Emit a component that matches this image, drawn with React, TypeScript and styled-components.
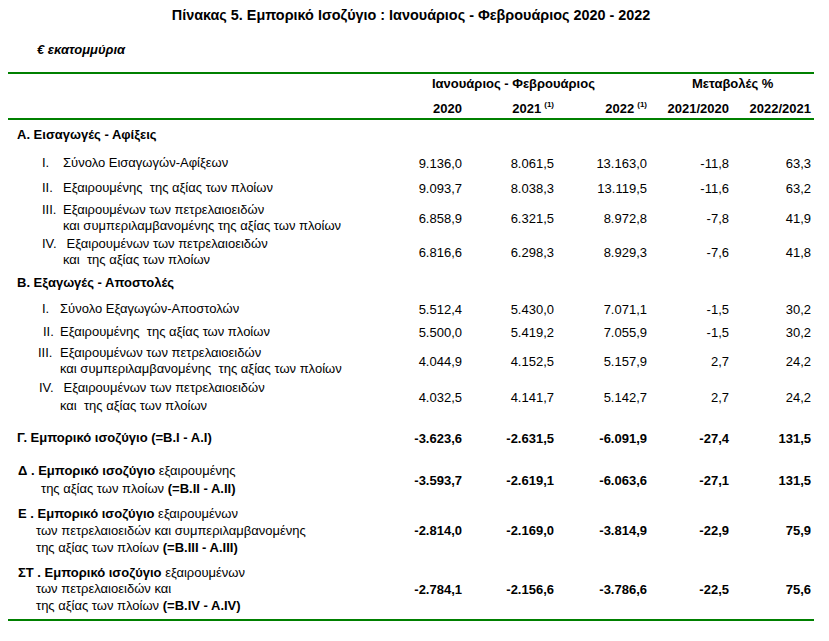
import React from "react";
import styled, { createGlobalStyle } from "styled-components";

const Global = createGlobalStyle`
  html, body { margin: 0; padding: 0; background: #fff; }
  body { font-family: "Liberation Sans", Arial, sans-serif; color: #000; }
`;

const GREEN = "#008000";
const COLS = "392px 62px 92px 93px 82px 82px 3px";

const Page = styled.div`
  width: 829px;
  padding: 7px 15px 0 8px;
  box-sizing: border-box;
`;

const Title = styled.div`
  text-align: center;
  font-weight: bold;
  font-size: 14.4px;
  line-height: 16px;
  height: 16px;
`;

const Unit = styled.div`
  margin: 19px 0 0 29px;
  font-weight: bold;
  font-style: italic;
  font-size: 13px;
  line-height: 16px;
`;

const Table = styled.div`
  margin-top: 14px;
  width: 806px;
  border-top: 2px solid ${GREEN};
  border-bottom: 2px solid ${GREEN};
`;

const Head = styled.div`
  border-bottom: 2px solid ${GREEN};
  height: 46px;
  box-sizing: border-box;
`;

const HeadRow = styled.div<{ $h: number; $pt?: number }>`
  display: grid;
  grid-template-columns: ${COLS};
  height: ${(p) => p.$h}px;
  padding-top: ${(p) => p.$pt ?? 0}px;
  box-sizing: border-box;
  font-weight: bold;
  font-size: 13px;
  line-height: 16px;
  align-items: ${(p) => (p.$pt ? "start" : "center")};
`;

const Group = styled.div<{ $from: number; $to: number; $pl: number }>`
  grid-column: ${(p) => p.$from} / ${(p) => p.$to};
  padding-left: ${(p) => p.$pl}px;
  white-space: nowrap;
`;

const HeadCell = styled.div<{ $col: number }>`
  grid-column: ${(p) => p.$col};
  text-align: right;
  white-space: nowrap;
`;

const Sup = styled.sup`
  font-size: 8px;
  line-height: 0;
  vertical-align: 6px;
  margin-left: 3px;
`;

const Row = styled.div<{ $h: number; $bold?: boolean }>`
  display: grid;
  grid-template-columns: ${COLS};
  height: ${(p) => p.$h}px;
  align-items: center;
  font-size: 13px;
  font-weight: ${(p) => (p.$bold ? "bold" : "normal")};
`;

const Label = styled.div<{ $lh?: number }>`
  grid-column: 1;
  display: flex;
  line-height: ${(p) => p.$lh ?? 16}px;
  white-space: pre;
`;

const Section = styled.div`
  padding-left: 9px;
  font-weight: bold;
  line-height: 16px;
`;

const Numeral = styled.span<{ $left: number; $w: number }>`
  margin-left: ${(p) => p.$left}px;
  width: ${(p) => p.$w}px;
  flex: none;
`;

const Lines = styled.div`
  display: flex;
  flex-direction: column;
`;

const Summary = styled.div<{ $lh: number }>`
  padding-left: 10px;
  line-height: ${(p) => p.$lh}px;
  white-space: pre;
  font-weight: normal;
`;

const Indent = styled.div<{ $pl: number }>`
  padding-left: ${(p) => p.$pl}px;
`;

const B = styled.b`
  font-weight: bold;
`;

const Num = styled.div`
  text-align: right;
  white-space: nowrap;
`;

type Vals = [string, string, string, string, string];

const Nums = ({ v }: { v: Vals }) => (
  <>
    {v.map((x, i) => (
      <Num key={i}>{x}</Num>
    ))}
  </>
);

type Item = {
  h: number;
  num: string;
  left: number;
  w: number;
  lines: string[];
  lh?: number;
  v: Vals;
};

const ItemRow = ({ it }: { it: Item }) => (
  <Row $h={it.h}>
    <Label $lh={it.lh}>
      <Numeral $left={it.left} $w={it.w}>
        {it.num}
      </Numeral>
      <Lines>
        {it.lines.map((l, i) => (
          <span key={i}>{l}</span>
        ))}
      </Lines>
    </Label>
    <Nums v={it.v} />
  </Row>
);

const importsRows: Item[] = [
  { h: 26, num: "I.", left: 34, w: 21, lines: ["Σύνολο Εισαγωγών-Αφίξεων"], v: ["9.136,0", "8.061,5", "13.163,0", "-11,8", "63,3"] },
  { h: 24, num: "II.", left: 34, w: 21, lines: ["Εξαιρουμένης  της αξίας των πλοίων"], v: ["9.093,7", "8.038,3", "13.119,5", "-11,6", "63,2"] },
  { h: 36, num: "III.", left: 34, w: 21, lines: ["Εξαιρουμένων των πετρελαιοειδών", "και συμπεριλαμβανομένης της αξίας των πλοίων"], v: ["6.858,9", "6.321,5", "8.972,8", "-7,8", "41,9"] },
  { h: 32, num: "IV.", left: 34, w: 21, lines: [" Εξαιρουμένων των πετρελαιοειδών", "και  της αξίας των πλοίων"], v: ["6.816,6", "6.298,3", "8.929,3", "-7,6", "41,8"] },
];

const exportsRows: Item[] = [
  { h: 22, num: "I.", left: 34, w: 18, lines: ["Σύνολο Εξαγωγών-Αποστολών"], v: ["5.512,4", "5.430,0", "7.071,1", "-1,5", "30,2"] },
  { h: 24, num: "II.", left: 35, w: 17, lines: ["Εξαιρουμένης  της αξίας των πλοίων"], v: ["5.500,0", "5.419,2", "7.055,9", "-1,5", "30,2"] },
  { h: 34, num: "III.", left: 30, w: 22, lines: ["Εξαιρουμένων των πετρελαιοειδών", "και συμπεριλαμβανομένης  της αξίας των πλοίων"], v: ["4.044,9", "4.152,5", "5.157,9", "2,7", "24,2"] },
  { h: 38, num: "IV.", left: 31, w: 21, lh: 18, lines: [" Εξαιρουμένων των πετρελαιοειδών", "και  της αξίας των πλοίων"], v: ["4.032,5", "4.141,7", "5.142,7", "2,7", "24,2"] },
];

export default function App() {
  return (
    <Page>
      <Global />
      <Title>Πίνακας 5. Εμπορικό Ισοζύγιο : Ιανουάριος - Φεβρουάριος 2020 - 2022</Title>
      <Unit>€ εκατομμύρια</Unit>
      <Table>
        <Head>
          <HeadRow $h={20}>
            <Group $from={2} $to={5} $pl={32}>
              Ιανουάριος - Φεβρουάριος
            </Group>
            <Group $from={5} $to={7} $pl={45}>
              Μεταβολές %
            </Group>
          </HeadRow>
          <HeadRow $h={24} $pt={7}>
            <HeadCell $col={2}>2020</HeadCell>
            <HeadCell $col={3}>
              2021<Sup>(1)</Sup>
            </HeadCell>
            <HeadCell $col={4}>
              2022<Sup>(1)</Sup>
            </HeadCell>
            <HeadCell $col={5}>2021/2020</HeadCell>
            <HeadCell $col={6}>2022/2021</HeadCell>
          </HeadRow>
        </Head>

        <Row $h={30}>
          <Label>
            <Section>Α. Εισαγωγές - Αφίξεις</Section>
          </Label>
        </Row>
        {importsRows.map((it, i) => (
          <ItemRow key={"a" + i} it={it} />
        ))}

        <Row $h={30}>
          <Label>
            <Section>Β. Εξαγωγές - Αποστολές</Section>
          </Label>
        </Row>
        {exportsRows.map((it, i) => (
          <ItemRow key={"b" + i} it={it} />
        ))}

        <Row $h={44} $bold>
          <Label>
            <Section>Γ. Εμπορικό ισοζύγιο (=Β.Ι - Α.Ι)</Section>
          </Label>
          <Nums v={["-3.623,6", "-2.631,5", "-6.091,9", "-27,4", "131,5"]} />
        </Row>

        <Row $h={40} $bold>
          <Label>
            <Summary $lh={18}>
              <div>
                <B>Δ . Εμπορικό ισοζύγιο</B> εξαιρουμένης
              </div>
              <Indent $pl={23}>
                της αξίας των πλοίων <B>(=B.II - A.II)</B>
              </Indent>
            </Summary>
          </Label>
          <Nums v={["-3.593,7", "-2.619,1", "-6.063,6", "-27,1", "131,5"]} />
        </Row>

        <Row $h={60} $bold>
          <Label>
            <Summary $lh={17}>
              <div>
                <B>Ε . Εμπορικό ισοζύγιο</B> εξαιρουμένων
              </div>
              <Indent $pl={18}>των πετρελαιοειδών και συμπεριλαμβανομένης</Indent>
              <Indent $pl={18}>
                της αξίας των πλοίων <B>(=B.III - A.III)</B>
              </Indent>
            </Summary>
          </Label>
          <Nums v={["-2.814,0", "-2.169,0", "-3.814,9", "-22,9", "75,9"]} />
        </Row>

        <Row $h={59} $bold>
          <Label>
            <Summary $lh={16.5}>
              <div>
                <B>ΣΤ . Εμπορικό ισοζύγιο</B> εξαιρουμένων
              </div>
              <Indent $pl={18}>των πετρελαιοειδών και</Indent>
              <Indent $pl={18}>
                της αξίας των πλοίων <B>(=B.IV - A.IV)</B>
              </Indent>
            </Summary>
          </Label>
          <Nums v={["-2.784,1", "-2.156,6", "-3.786,6", "-22,5", "75,6"]} />
        </Row>
      </Table>
    </Page>
  );
}
